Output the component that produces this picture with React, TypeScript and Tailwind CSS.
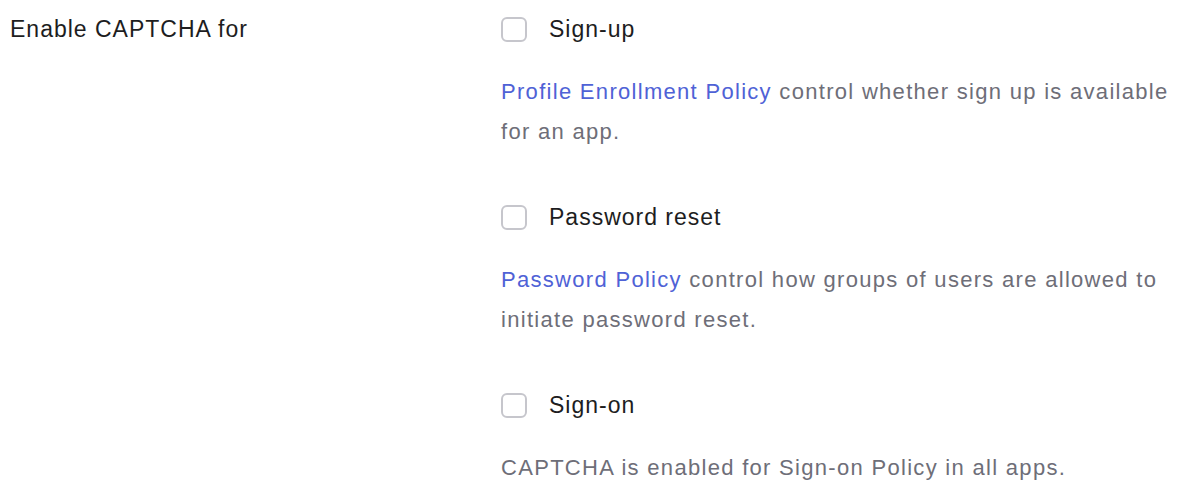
import { useState } from 'react';

interface Option {
  id: string;
  label: string;
  link?: string;
  text: string;
}

const options: Option[] = [
  {
    id: 'signup',
    label: 'Sign-up',
    link: 'Profile Enrollment Policy',
    text: ' control whether sign up is available for an app.',
  },
  {
    id: 'reset',
    label: 'Password reset',
    link: 'Password Policy',
    text: ' control how groups of users are allowed to initiate password reset.',
  },
  {
    id: 'signon',
    label: 'Sign-on',
    text: 'CAPTCHA is enabled for Sign-on Policy in all apps.',
  },
];

export default function App() {
  const [checked, setChecked] = useState<Record<string, boolean>>({});

  return (
    <div className="w-[1200px] h-[502px] bg-white font-['Liberation_Sans',Arial,sans-serif] overflow-hidden">
      <div className="grid grid-cols-[491px_1fr] pl-[10px]">
        <div className="h-[58px] flex items-center text-[23px] tracking-[1px] text-[#1d1d21]">Enable CAPTCHA for</div>

        <div className="flex flex-col">
          {options.map((o, i) => (
            <div key={o.id} className={i > 0 ? 'mt-[36px]' : ''}>
              <label className="h-[58px] flex items-center gap-[22px] cursor-pointer">
                <span
                  className={`w-[26px] h-[25px] rounded-[6px] border-2 ${
                    checked[o.id] ? 'bg-[#4c64d9] border-[#4c64d9]' : 'bg-white border-[#c6c6cc]'
                  }`}
                  onClick={() => setChecked(p => ({ ...p, [o.id]: !p[o.id] }))}
                />
                <span className="text-[23px] tracking-[1px] text-[#1d1d21]">{o.label}</span>
              </label>
              <p className="mt-[14px] max-w-[690px] text-[22px] tracking-[1.3px] leading-[40px] text-[#6e6e78]">
                {o.link && <a className="text-[#4f62d6]">{o.link}</a>}
                {o.text}
              </p>
            </div>
          ))}
        </div>
      </div>
    </div>
  );
}
